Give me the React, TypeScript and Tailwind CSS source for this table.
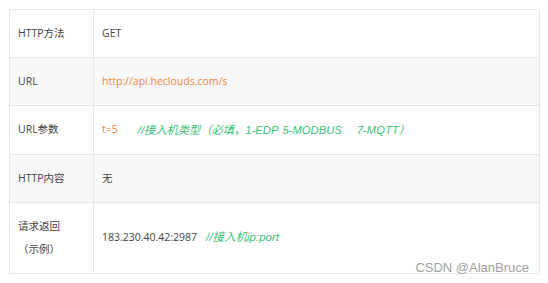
import React from "react";

const font = { fontFamily: '"Open Sans", "Noto Sans CJK SC", sans-serif' };
const cfont = { fontFamily: '"Liberation Sans", "Noto Sans CJK SC", sans-serif' };

function Row({
  label,
  children,
  gray,
  h,
  last,
}: {
  label: React.ReactNode;
  children: React.ReactNode;
  gray?: boolean;
  h: string;
  last?: boolean;
}) {
  return (
    <div
      className={`flex ${h} ${gray ? "bg-[#f8f8f8]" : "bg-white"} ${
        last ? "" : "border-b border-[#e6e6e6]"
      }`}
    >
      <div className="w-[84px] shrink-0 border-r border-[#e6e6e6] flex items-center pl-[8px] text-[#444]">
        {label}
      </div>
      <div className="flex-1 flex items-center pl-[8px] text-[#444]">{children}</div>
    </div>
  );
}

export default function App() {
  return (
    <div
      className="relative w-[548px] h-[283px] bg-white pt-[9px] pl-[9px] text-[10.5px]"
      style={font}
    >
      <div className="w-[531px] border border-[#e6e6e6]">
        <Row label="HTTP方法" h="h-[48px]">
          GET
        </Row>
        <Row label="URL" h="h-[48px]" gray>
          <span className="text-[#f0843c]">http://api.heclouds.com/s</span>
        </Row>
        <Row label="URL参数" h="h-[49px]">
          <span className="text-[#f0843c]">t=5</span>
          <span
            className="ml-[20px] italic text-[#3cbf76] text-[11.25px] flex items-center whitespace-pre"
            style={cfont}
          >
            <span>//接入机类型（必填，1-EDP</span>
            <span className="ml-[4px]">5-MODBUS</span>
            <span className="ml-[15px]">7-MQTT）</span>
          </span>
        </Row>
        <Row label="HTTP内容" h="h-[48px]" gray>
          无
        </Row>
        <Row
          label={
            <div className="leading-[23px] flex flex-col">
              <span>请求返回</span>
              <span>（示例）</span>
            </div>
          }
          h="h-[70px]"
          last
        >
          <span>183.230.40.42:2987</span>
          <span className="ml-[9px] italic text-[#3cbf76] text-[11.5px]" style={cfont}>
            //接入机ip:port
          </span>
        </Row>
      </div>
      <div
        className="absolute right-[19px] bottom-[9px] text-[13px] text-[#a0a0a0] leading-none"
        style={{ fontFamily: '"Liberation Sans", Arial, sans-serif' }}
      >
        CSDN @AlanBruce
      </div>
    </div>
  );
}
